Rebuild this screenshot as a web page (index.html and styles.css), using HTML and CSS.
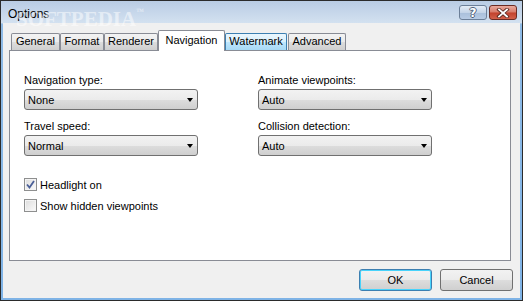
FILE: index.html
```html
<!DOCTYPE html>
<html>
<head>
<meta charset="utf-8">
<link rel="stylesheet" href="styles.css">
</head>
<body>
<div class="window">
  <div class="titlebar">
    <span class="title">Options</span>
    <div class="caption">
      <button class="cap-btn help"><span>?</span></button>
      <button class="cap-btn close">
        <svg width="14" height="10" viewBox="0 0 14 10"><path d="M3 1.5 L11 8.5 M11 1.5 L3 8.5" stroke="#5a2a22" stroke-width="3.6" stroke-linecap="square"/><path d="M3 1.5 L11 8.5 M11 1.5 L3 8.5" stroke="#fff" stroke-width="1.8" stroke-linecap="square"/></svg>
      </button>
    </div>
  </div>
  <div class="client">
    <div class="tabs">
      <div class="tab w-general">General</div>
      <div class="tab w-format">Format</div>
      <div class="tab w-renderer">Renderer</div>
      <div class="tab selected w-navigation">Navigation</div>
      <div class="tab hover w-watermark">Watermark</div>
      <div class="tab w-advanced">Advanced</div>
    </div>
    <div class="panel">
      <div class="form">
        <div class="field">
          <label class="lbl">Navigation type:</label>
          <div class="combo"><span>None</span><i class="arrow"></i></div>
        </div>
        <div class="field">
          <label class="lbl">Animate viewpoints:</label>
          <div class="combo"><span>Auto</span><i class="arrow"></i></div>
        </div>
        <div class="field">
          <label class="lbl">Travel speed:</label>
          <div class="combo"><span>Normal</span><i class="arrow"></i></div>
        </div>
        <div class="field">
          <label class="lbl">Collision detection:</label>
          <div class="combo"><span>Auto</span><i class="arrow"></i></div>
        </div>
      </div>
      <div class="checks">
        <div class="check-row">
          <span class="box checked">
            <svg width="9" height="9" viewBox="0 0 9 9"><path d="M1 4.5 L3.5 7.5 L8 1" fill="none" stroke="#4a5f97" stroke-width="1.8"/></svg>
          </span>
          <span>Headlight on</span>
        </div>
        <div class="check-row">
          <span class="box"></span>
          <span>Show hidden viewpoints</span>
        </div>
      </div>
    </div>
    <div class="footer">
      <button class="btn default">OK</button>
      <button class="btn">Cancel</button>
    </div>
  </div>
  <div class="wm">SOFTPEDIA<sup>™</sup></div>
  <div class="wm-small">www.softpedia.com</div>
</div>
</body>
</html>
```

FILE: styles.css
```css
* { box-sizing: border-box; }

body {
  margin: 0;
  font-family: "Liberation Sans", Arial, sans-serif;
  font-size: 11px;
  color: #000;
  background: #fff;
}

.window {
  position: relative;
  width: 523px;
  height: 301px;
  border: 1px solid #2b2b2b;
  background: linear-gradient(#bccde2 0, #c9d8ea 22px, #8fbbe6 23px, #7fb3e6 100%);
  display: flex;
  flex-direction: column;
  overflow: hidden;
}

.titlebar {
  height: 22px;
  flex: none;
  display: flex;
  align-items: flex-start;
  padding-left: 7px;
  background: linear-gradient(#b9cce4, #d3e1f0);
}

.title {
  font-size: 12px;
  line-height: 14px;
  margin-top: 6px;
}

.caption {
  margin-left: auto;
  margin-right: 5px;
  margin-top: 4px;
  display: flex;
  gap: 2px;
}

.cap-btn {
  width: 28px;
  height: 15px;
  padding: 0;
  border-radius: 3px;
  display: flex;
  align-items: center;
  justify-content: center;
  font: inherit;
}

.help {
  border: 1px solid #6c7f98;
  background: linear-gradient(#e4ecf6 0%, #c4d4e8 50%, #a9bfdb 51%, #b7cbe4 100%);
}

.help span {
  font-family: "DejaVu Sans", sans-serif;
  font-weight: bold;
  font-size: 12px;
  line-height: 12px;
  color: #fff;
  text-shadow: 1px 0 #50617a, -1px 0 #50617a, 0 1px #50617a, 0 -1px #50617a;
}

.close {
  border: 1px solid #6b2b23;
  background: linear-gradient(#e9a99d 0%, #d77a69 48%, #c2412c 52%, #d2604a 100%);
}

.close svg { display: block; }

.client {
  flex: 1;
  margin: 0 2px 2px 2px;
  background: #f0f0f0;
  display: flex;
  flex-direction: column;
  padding: 7px 7px 7px 6px;
}

.tabs {
  height: 20px;
  display: flex;
  align-items: flex-end;
  padding-left: 2px;
  position: relative;
  z-index: 1;
}

.tab {
  height: 17px;
  line-height: 15px;
  text-align: center;
  border: 1px solid #898c95;
  border-bottom: none;
  border-radius: 2px 2px 0 0;
  background: linear-gradient(#f3f3f3 0%, #ebebeb 50%, #dddddd 51%, #cfcfcf 100%);
  white-space: nowrap;
}

.tab.selected {
  height: 21px;
  margin-bottom: -1px;
  line-height: 18px;
  background: #fff;
}

.tab.hover {
  border-color: #3c7fb1;
  background: linear-gradient(#eaf6fd 0%, #d9f0fc 50%, #bee6fd 51%, #a7d9f5 100%);
}

.w-general { width: 49px; }
.w-format { width: 44px; }
.w-renderer { width: 54px; }
.w-navigation { width: 67px; }
.w-watermark { width: 62px; }
.w-advanced { width: 58px; margin-left: 1px; }

.panel {
  height: 211px;
  margin-right: 2px;
  border: 1px solid #898c95;
  background: #fff;
  padding: 23px 0 0 14px;
}

.form {
  display: grid;
  grid-template-columns: 174px 174px;
  column-gap: 60px;
  row-gap: 10px;
}

.field {
  display: flex;
  flex-direction: column;
}

.lbl {
  line-height: 13px;
  margin-bottom: 2px;
}

.combo {
  height: 21px;
  border: 1px solid #707070;
  border-radius: 3px;
  background: linear-gradient(#f2f2f2 0%, #ebebeb 50%, #dddddd 51%, #cfcfcf 100%);
  display: flex;
  align-items: center;
  padding: 0 4px 0 3px;
}

.combo span { flex: 1; }

.arrow {
  width: 0;
  height: 0;
  border-left: 3.5px solid transparent;
  border-right: 3.5px solid transparent;
  border-top: 4px solid #000;
}

.checks {
  margin-top: 22px;
  display: flex;
  flex-direction: column;
  gap: 8px;
}

.check-row {
  display: flex;
  align-items: center;
  gap: 3px;
  height: 13px;
}

.box {
  width: 13px;
  height: 13px;
  border: 1px solid #8e8f8f;
  background: linear-gradient(135deg, #dcdcdc, #fbfbfb);
  box-shadow: inset 0 0 0 1px #f4f4f4;
  display: flex;
  align-items: center;
  justify-content: center;
}

.box svg { display: block; }

.footer {
  margin-top: 8px;
  display: flex;
  justify-content: flex-end;
  gap: 8px;
}

.btn {
  width: 73px;
  height: 22px;
  padding: 0;
  font: inherit;
  color: #000;
  border: 1px solid #707070;
  border-radius: 3px;
  background: linear-gradient(#f2f2f2 0%, #ebebeb 50%, #dddddd 51%, #cfcfcf 100%);
}

.btn.default {
  border-color: #3c7fb1;
  box-shadow: inset 0 0 0 1px #48d3fb;
}

.wm {
  position: absolute;
  left: 15px;
  top: 7px;
  font-family: "Liberation Serif", serif;
  font-weight: bold;
  font-size: 21px;
  line-height: 22px;
  color: rgba(255, 255, 255, 0.5);
  pointer-events: none;
}

.wm sup {
  font-size: 8px;
  vertical-align: top;
  line-height: 8px;
}

.wm-small {
  position: absolute;
  left: 77px;
  top: 40px;
  font-size: 7px;
  color: rgba(150, 150, 150, 0.3);
  pointer-events: none;
}
```
